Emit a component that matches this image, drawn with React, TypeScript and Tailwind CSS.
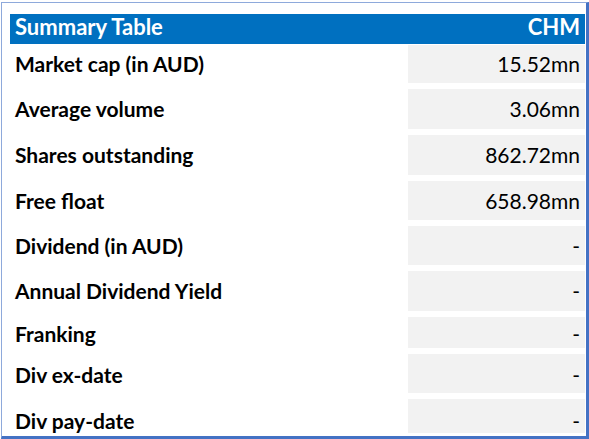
const rows = [
  { label: 'Market cap (in AUD)', value: '15.52mn', h: 'h-[38px]', pt: 'pt-[7px]' },
  { label: 'Average volume', value: '3.06mn', h: 'h-[40px]', pt: 'pt-[8px]' },
  { label: 'Shares outstanding', value: '862.72mn', h: 'h-[40px]', pt: 'pt-[8px]' },
  { label: 'Free float', value: '658.98mn', h: 'h-[39px]', pt: 'pt-[8px]' },
  { label: 'Dividend (in AUD)', value: '-', h: 'h-[39px]', pt: 'pt-[8px]' },
  { label: 'Annual Dividend Yield', value: '-', h: 'h-[40px]', pt: 'pt-[8px]' },
  { label: 'Franking', value: '-', h: 'h-[31px]', pt: 'pt-[5px]' },
  { label: 'Div ex-date', value: '-', h: 'h-[39px]', pt: 'pt-[9px]' },
  { label: 'Div pay-date', value: '-', h: 'h-[34px]', pt: 'pt-[10px]' },
];

export default function App() {
  return (
    <div className="w-[589px] h-[439px] bg-white pt-[2px] pl-[1px]" style={{ fontFamily: 'Lato, "Open Sans", sans-serif' }}>
      <div className="h-[437px] border-l border-t border-[#8ea9db] border-r-[3px] border-b-[3px] border-r-[#4472c4] border-b-[#4472c4] pl-[8px] pt-[11px] overflow-hidden">
        {/* Header */}
        <div className="w-[575px] h-[30px] bg-[#0070c0] flex items-start justify-between px-[5px] pt-[2px] text-white font-bold text-[22px] leading-[22px]">
          <span>Summary Table</span>
          <span>CHM</span>
        </div>

        {/* Rows */}
        <div className="flex flex-col gap-[6px] mt-[1px] w-[575px]">
          {rows.map((r) => (
            <div key={r.label} className={`flex ${r.h} text-[21px] leading-[24px] text-black`}>
              <div className={`w-[398px] pl-[5px] ${r.pt} font-bold`}>{r.label}</div>
              <div className={`flex-1 bg-[#f2f2f2] text-right pr-[5px] ${r.pt}`}>{r.value}</div>
            </div>
          ))}
        </div>
      </div>
    </div>
  );
}
